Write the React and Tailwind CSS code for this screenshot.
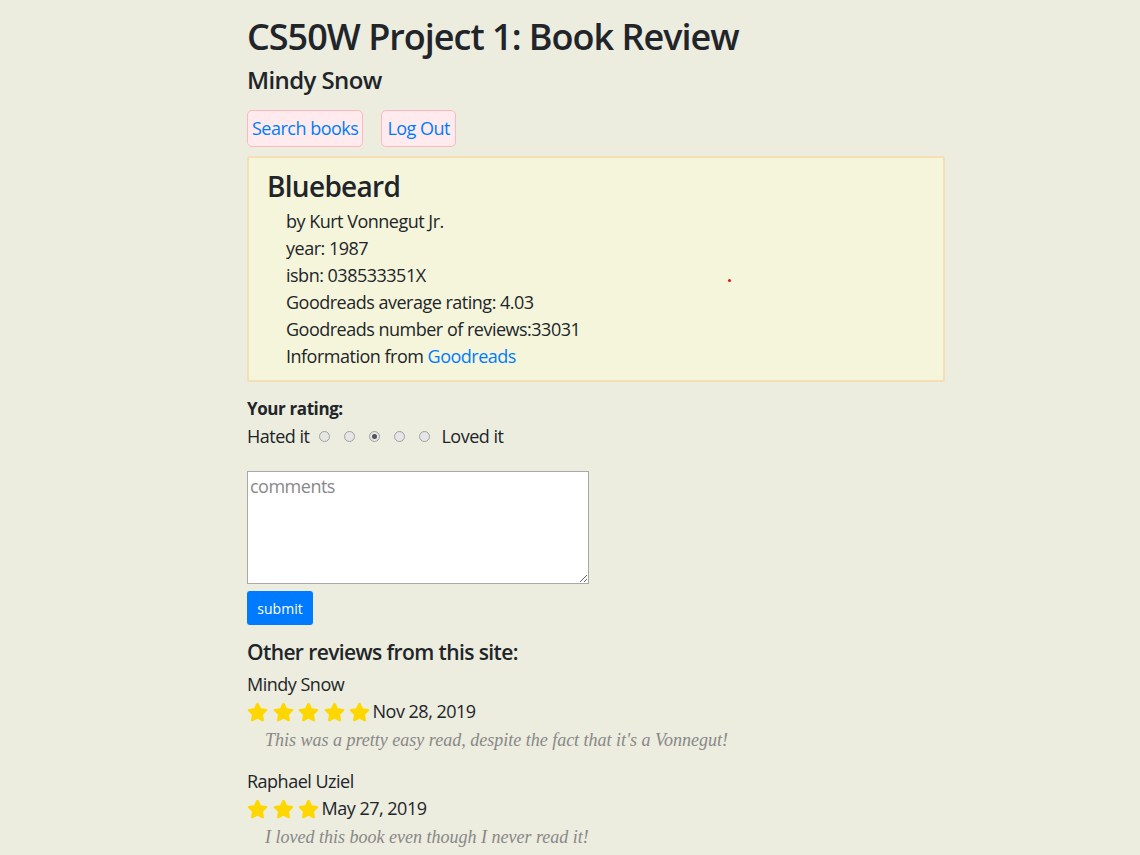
import React from 'react';
import { FaStar } from 'react-icons/fa';

const font = { fontFamily: '"Open Sans", "Noto Sans", sans-serif' };

const reviews = [
  { name: 'Mindy Snow', stars: 5, date: 'Nov 28, 2019', text: "This was a pretty easy read, despite the fact that it's a Vonnegut!" },
  { name: 'Raphael Uziel', stars: 3, date: 'May 27, 2019', text: 'I loved this book even though I never read it!' },
];

const Radio = ({ checked }) => (
  <span className="w-[11px] h-[11px] rounded-full border border-[#a0a0a0] bg-[#e6e6e6] flex items-center justify-center">
    {checked && <span className="w-[5px] h-[5px] rounded-full bg-[#555]" />}
  </span>
);

const Review = ({ review }) => (
  <div className="mb-[14px]">
    <p className="text-[18px] leading-[27px] tracking-[-0.5px]">{review.name}</p>
    <div className="flex items-center h-[27px]">
      {Array.from({ length: review.stars }).map((_, i) => (
        <FaStar key={i} className="text-[#ffd700] w-[21px] h-[20px] mr-[4.5px]" />
      ))}
      <span className="ml-[-2px] text-[18px] tracking-[-0.5px]">{review.date}</span>
    </div>
    <p
      className="mt-[2px] pl-[18px] text-[18px] leading-[27px] italic text-[#888]"
      style={{ fontFamily: '"Liberation Serif", serif' }}
    >
      {review.text}
    </p>
  </div>
);

export default function App() {
  return (
    <div className="min-h-[855px] bg-[#ececdf] text-[#212529]" style={font}>
      <div className="ml-[247px] w-[698px] pt-[14px]">
        <h1 className="text-[36px] leading-[46px] font-semibold tracking-[-1px]">CS50W Project 1: Book Review</h1>
        <h3 className="text-[24px] leading-[30px] font-semibold tracking-[-0.6px] mt-[5px]">Mindy Snow</h3>
        <div className="flex gap-[18px] mt-[15px] tracking-[-0.5px]">
          <a className="h-[37px] px-[4px] flex items-center border border-[#ffb6c1] bg-[#ffebee] rounded-[5px] text-[18px] text-[#007bff]">
            Search books
          </a>
          <a className="h-[37px] px-[5px] flex items-center border border-[#ffb6c1] bg-[#ffebee] rounded-[5px] text-[18px] text-[#007bff]">
            Log Out
          </a>
        </div>
        <div className="relative mt-[9px] border-2 border-[#f5deb3] bg-[#f5f5dc] rounded-[3px] pl-[18px] pt-[9px] pb-[10px]">
          <h2 className="text-[28px] leading-[38px] font-semibold tracking-[-0.7px] mb-[3px]">Bluebeard</h2>
          <ul className="pl-[19px] text-[18px] leading-[27px] tracking-[-0.5px]">
            <li>by Kurt Vonnegut Jr.</li>
            <li>year: 1987</li>
            <li>isbn: 038533351X</li>
            <li>Goodreads average rating: 4.03</li>
            <li>Goodreads number of reviews:33031</li>
            <li>
              Information from <a className="text-[#007bff]">Goodreads</a>
            </li>
          </ul>
          <span className="absolute left-[479px] top-[121px] w-[3px] h-[3px] rounded-full bg-[#e0101a]" />
        </div>
        <p className="mt-[15px] text-[17px] leading-[24px] font-bold tracking-[-0.4px]">Your rating:</p>
        <div className="flex items-center h-[30px] text-[18px] tracking-[-0.5px]">
          <span className="mr-[10px]">Hated it</span>
          <div className="flex gap-[14px]">
            <Radio />
            <Radio />
            <Radio checked />
            <Radio />
            <Radio />
          </div>
          <span className="ml-[11px]">Loved it</span>
        </div>
        <textarea
          placeholder="comments"
          className="mt-[20px] block w-[342px] h-[113px] bg-white border border-[#a9a9a9] px-[2px] py-[1px] text-[18px] tracking-[-0.5px] placeholder:text-[#888] outline-none"
        />
        <button className="mt-[7px] h-[34px] w-[66px] rounded-[3px] bg-[#007bff] text-white text-[14px]">
          submit
        </button>
        <h4 className="mt-[13px] text-[21px] leading-[28px] font-semibold tracking-[-0.6px]">Other reviews from this site:</h4>
        <div className="mt-[5px]">
          {reviews.map((r) => (
            <Review key={r.name} review={r} />
          ))}
        </div>
      </div>
    </div>
  );
}
